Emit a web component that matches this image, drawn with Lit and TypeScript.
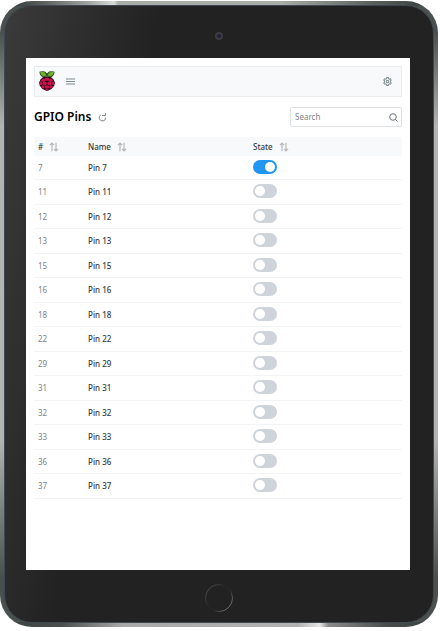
import { LitElement, html, css, svg } from "lit";
import { customElement, property, state } from "lit/decorators.js";

interface Pin {
  num: number;
  on: boolean;
}

const PIN_NUMBERS = [7, 11, 12, 13, 15, 16, 18, 22, 29, 31, 32, 33, 36, 37];

const sortIcon = svg`<svg class="sort-icon" width="10" height="10" viewBox="0 0 10 10" fill="none" stroke="currentColor" stroke-width="1.2">
  <path d="M3 9.2V1M.9 3.1L3 1l2.1 2.1M7 .8V9M5.2 7L7 9l2.1-2.1" />
</svg>`;

// Drupelets of the raspberry, as [cx, cy, rx, ry].
const DRUPELETS = [
  [8, 8.2, 2.2, 1.6],
  [4.4, 9.2, 2, 1.8],
  [11.6, 9.2, 2, 1.8],
  [5.6, 12.5, 2.2, 2],
  [10.4, 12.5, 2.2, 2],
  [1.9, 12.2, 1.2, 2],
  [14.1, 12.2, 1.2, 2],
  [8, 16, 2.2, 1.7],
  [3.9, 15.9, 1.7, 1.6],
  [12.1, 15.9, 1.7, 1.6],
  [8, 18.7, 1.9, 0.8],
];

@customElement("pi-logo")
class PiLogo extends LitElement {
  static styles = css`
    :host { display: block; width: 16px; height: 20px; }
    svg { display: block; }
  `;
  render() {
    return html`<svg width="16" height="20" viewBox="0 0 16 20" role="img" aria-label="Raspberry Pi">
      <path d="M4.5 5.6h7l3 3 1.4 3-.7 3.2-2.6 3.2L8 20l-4.6-2L.8 14.8l-.7-3.2L1.5 8.6z" fill="#2a0a14" />
      ${DRUPELETS.map(([x, y, a, b]) => svg`<ellipse cx=${x} cy=${y} rx=${a} ry=${b} fill="#c7134b" />`)}
      <path d="M.4.7L3 .2l3 .4L8 2.6l2-2 3-.4 2.6.5-.6 3-2.2 2.3L8 5.6l-4.800.4L1 3.7z" fill="#27451a" />
      <path d="M1.1 1.1L3.5.8l2.300.6 1.8 3.2-3.600.7-2.200-1.8zM14.9 1.1L12.5.8l-2.300.6-1.8 3.2 3.600.7 2.200-1.8z" fill="#6db22c" />
    </svg>`;
  }
}

@customElement("pin-table")
class PinTable extends LitElement {
  static styles = css`
    :host { display: block; color: #495057; }
    table { width: 100%; border-collapse: separate; border-spacing: 0; table-layout: fixed; }
    th, td { padding: 0 4px; text-align: left; vertical-align: middle; box-sizing: border-box; line-height: 12px; }
    th { height: 19px; background: #f8f9fa; font-weight: 500; color: #343a40; }
    .num { width: 50px; }
    .name { width: 165px; }
    .sort {
      display: inline-flex; align-items: center; gap: 6px; padding: 0; border: 0;
      background: none; color: inherit; font: inherit; line-height: 12px; vertical-align: middle; cursor: pointer;
    }
    .sort-icon { color: #b9b7b9; }
    td { height: 24px; border-bottom: 1px solid #f3f4f5; }
    tr:nth-child(even) td { height: 25px; }
    .id { color: #7c838a; }
    .pin { color: #343a40; font-weight: 500; }
    .toggle {
      appearance: none; display: block; box-sizing: border-box; width: 24px; height: 14px;
      margin: 0 0 2px; padding: 2px; border-radius: 7px; background: #ced4da; cursor: pointer;
    }
    .toggle::before {
      content: ""; display: block; width: 10px; height: 10px; border-radius: 50%; background: #fff;
    }
    .toggle:checked { background: #2196f3; }
    .toggle:checked::before { margin-left: auto; }
  `;

  @property({ attribute: false }) pins: Pin[] = [];

  render() {
    return html`<table>
      <thead>
        <tr>
          <th class="num" scope="col"><button class="sort">#${sortIcon}</button></th>
          <th class="name" scope="col"><button class="sort">Name${sortIcon}</button></th>
          <th scope="col"><button class="sort">State${sortIcon}</button></th>
        </tr>
      </thead>
      <tbody>
        ${this.pins.map(
          (p) => html`<tr>
            <td class="id">${p.num}</td>
            <td class="pin"><label for="pin-${p.num}">Pin ${p.num}</label></td>
            <td><input id="pin-${p.num}" class="toggle" type="checkbox" role="switch" .checked=${p.on} /></td>
          </tr>`
        )}
      </tbody>
    </table>`;
  }
}

@customElement("tablet-frame")
class TabletFrame extends LitElement {
  static styles = css`
    :host { box-sizing: border-box; min-height: 100vh; padding: 1px 2px 4px 0; display: flex; }
    .metal {
      flex: 1; display: flex; padding: 4px; border-radius: 32px;
      background:
        linear-gradient(90deg, #3f4644 5%, #5c605e 10%, #a0a3a0 20%, #d8dad8 26%, #a9ada8 27%, #a9ada8 64%, #59605c 85%, #3f4644 95%) top / 100% 5px no-repeat,
        linear-gradient(90deg, #3f4644 5%, #4a4e4c 14%, #a8a8a8 28%, #b2b2b2 68%, #e6e6e6 73%, #8a8a8a 75%, #4a4e4c 88%, #3f4644 95%) bottom / 100% 5px no-repeat,
        linear-gradient(#4a504d 5%, #b2b5b1 20%, #b2b5b1 70%, #4a504d 92%) left / 5px 100% no-repeat,
        linear-gradient(#4a504d 5%, #b2b5b1 20%, #b2b5b1 70%, #4a504d 92%) right / 5px 100% no-repeat,
        #4a504e;
    }
    .bezel {
      flex: 1; display: flex; flex-direction: column; padding: 0 23px 0 21px;
      border: 1px solid #3f4752; border-radius: 28px;
      background: linear-gradient(100deg, #3b3b3b, #222 29%);
    }
    .top, .bottom { display: flex; align-items: center; justify-content: center; height: 52px; box-sizing: border-box; }
    .top { padding: 8px 0 0 2px; }
    .bottom { padding: 4px 0 0 2px; }
    .screen { flex: 1; background: #fff; }
    .camera { width: 4px; height: 4px; border: 2px solid #3c3c3e; border-radius: 50%; background: #22203a; }
    .home { display: block; }
  `;
  render() {
    return html`<div class="metal">
      <div class="bezel">
        <div class="top"><div class="camera"></div></div>
        <div class="screen"><slot></slot></div>
        <div class="bottom">
          <svg class="home" width="30" height="30" viewBox="0 0 30 30" fill="none" aria-hidden="true">
            <defs>
              <linearGradient id="ring" x1="0" y1="0.1" x2="1" y2="0.9">
                <stop offset="0" stop-color="#555" />
                <stop offset="0.45" stop-color="#242424" />
                <stop offset="0.6" stop-color="#282828" />
                <stop offset="1" stop-color="#8a8a8a" />
              </linearGradient>
            </defs>
            <circle cx="15" cy="15" r="13.5" stroke="url(#ring)" />
          </svg>
        </div>
      </div>
    </div>`;
  }
}

@customElement("app-root")
class AppRoot extends LitElement {
  static styles = css`
    :host { display: block; background: #fff; font: 8px/12px "Noto Sans", "Open Sans", sans-serif; color: #495057; }
    .page { padding: 8px; }
    button { display: block; padding: 0; border: 0; background: none; color: #7e8a8c; cursor: pointer; }
    svg { display: block; }
    .bar {
      display: flex; align-items: center; box-sizing: border-box; height: 31px; padding: 0 9px 0 4px;
      border: 1px solid #e9ecef; background: #f8f9fa;
    }
    .logo { padding-bottom: 2px; }
    .menu { margin-left: 11px; }
    .settings { margin-left: auto; }
    .heading { display: flex; align-items: center; gap: 7px; margin: 10px 0; height: 20px; }
    h1 { margin: 0; font-size: 12px; line-height: 20px; font-weight: 600; color: #000; }
    .search {
      display: flex; align-items: center; box-sizing: border-box; width: 112px; height: 20px;
      margin-left: auto; padding: 0 3px 0 4px; border: 1px solid #dee2e6; border-radius: 1px;
    }
    .search input { flex: 1; min-width: 0; padding: 0; border: 0; outline: 0; background: none; font: inherit; color: inherit; }
    .search input::placeholder { color: #7c838a; opacity: 1; }
    .search svg { color: #6c757d; }
  `;

  @state() private pins: Pin[] = PIN_NUMBERS.map((num) => ({ num, on: num === 7 }));

  render() {
    return html`<tablet-frame>
      <div class="page">
        <header class="bar">
          <pi-logo class="logo"></pi-logo>
          <button class="menu" aria-label="Menu">
            <svg width="9" height="7" viewBox="0 0 9 7" stroke="currentColor"><path d="M0 1h9M0 3.5h9M0 6h9" /></svg>
          </button>
          <button class="settings" aria-label="Settings">
            <svg width="9" height="9" viewBox="0 0 16 16" fill="none" stroke="currentColor" stroke-width="1.8">
              <path d="M6.7 1h2.6l.5 2 1.5.8 2-.6 1.3 2.3L13.1 7v2l1.5 1.5-1.3 2.3-2-.6-1.5.8-.5 2H6.7l-.5-2-1.5-.8-2 .6-1.3-2.3L2.9 9V7L1.4 5.5l1.3-2.3 2 .6L6.2 3z" />
              <circle cx="8" cy="8" r="2.3" />
            </svg>
          </button>
        </header>
        <div class="heading">
          <h1>GPIO Pins</h1>
          <button aria-label="Refresh">
            <svg width="9" height="9" viewBox="0 0 9 9" fill="none" stroke="currentColor">
              <path d="M3 1.7A3.3 3.3 0 1 0 7.8 4.6M4.2 2.5H7.5V0" />
            </svg>
          </button>
          <label class="search">
            <input type="text" placeholder="Search" aria-label="Search" />
            <svg width="9" height="9" viewBox="0 0 9 9" fill="none" stroke="currentColor">
              <circle cx="4" cy="4" r="3.3" /><path d="M6.3 6.3L8.6 8.6" />
            </svg>
          </label>
        </div>
        <pin-table .pins=${this.pins}></pin-table>
      </div>
    </tablet-frame>`;
  }
}
